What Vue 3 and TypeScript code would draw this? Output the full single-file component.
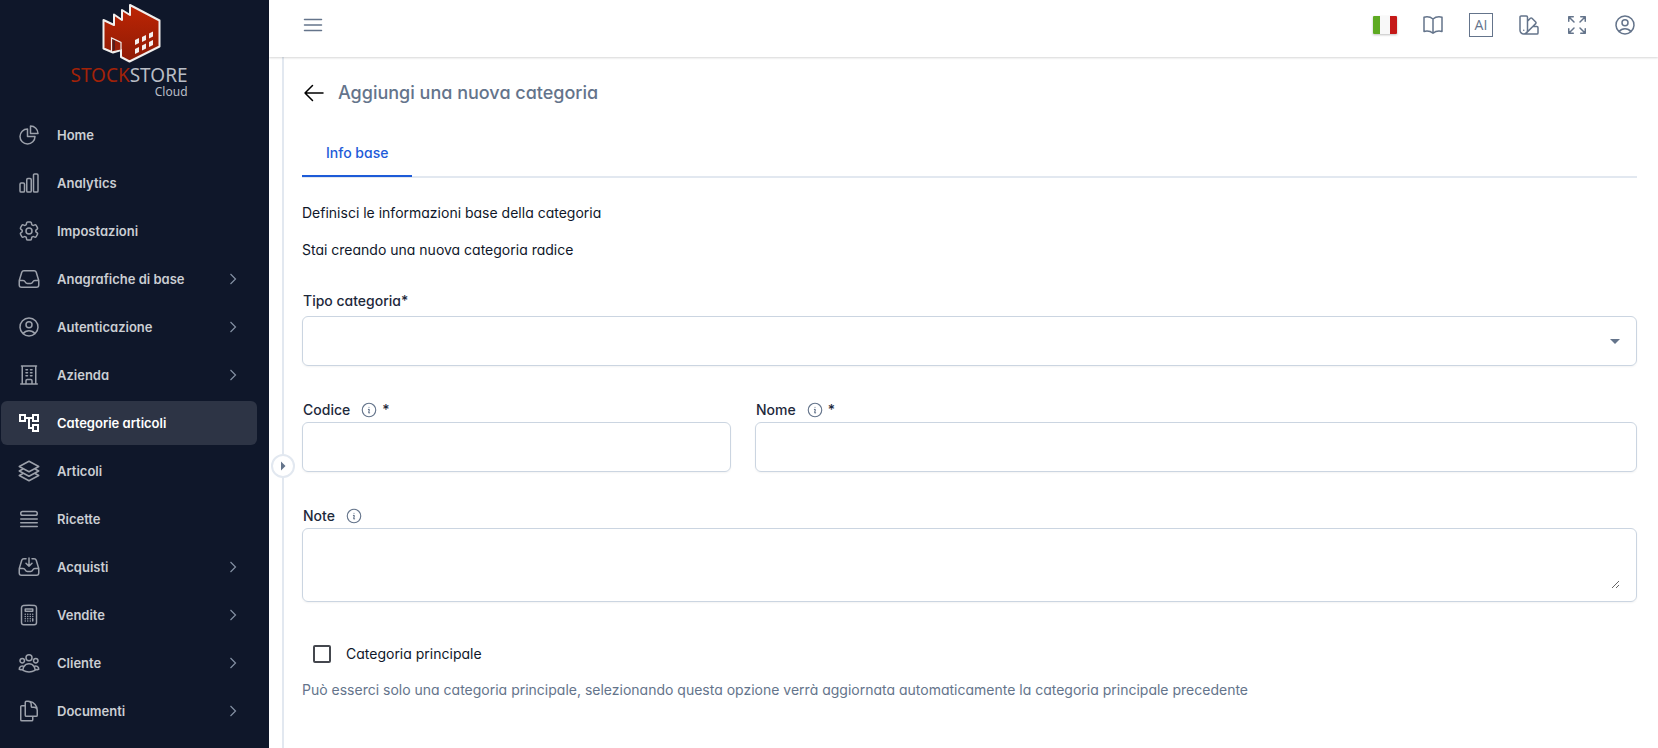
<script setup lang="ts">
import { ref } from 'vue'

interface NavItem {
  label: string
  icon: string[]
  fill?: boolean
  children?: boolean
  active?: boolean
}

const userCircle =
  'M17.982 18.725A7.488 7.488 0 0012 15.75a7.488 7.488 0 00-5.982 2.975m11.963 0a9 9 0 10-11.963 0m11.963 0A8.966 8.966 0 0112 21a8.966 8.966 0 01-5.982-2.275M15 9.75a3 3 0 11-6 0 3 3 0 016 0z'

const items: NavItem[] = [
  {
    label: 'Home',
    icon: ['M10.5 6a7.5 7.5 0 107.5 7.5h-7.5V6z', 'M13.5 10.5H21A7.5 7.5 0 0013.5 3v7.5z'],
  },
  {
    label: 'Analytics',
    icon: [
      'M3 13.125C3 12.504 3.504 12 4.125 12h2.25c.621 0 1.125.504 1.125 1.125v6.75C7.5 20.496 6.996 21 6.375 21h-2.25A1.125 1.125 0 013 19.875v-6.75zM9.75 8.625c0-.621.504-1.125 1.125-1.125h2.25c.621 0 1.125.504 1.125 1.125v11.25c0 .621-.504 1.125-1.125 1.125h-2.25a1.125 1.125 0 01-1.125-1.125V8.625zM16.5 4.125c0-.621.504-1.125 1.125-1.125h2.25C20.496 3 21 3.504 21 4.125v15.75c0 .621-.504 1.125-1.125 1.125h-2.25a1.125 1.125 0 01-1.125-1.125V4.125z',
    ],
  },
  {
    label: 'Impostazioni',
    icon: [
      'M9.594 3.94c.09-.542.56-.94 1.11-.94h2.593c.55 0 1.02.398 1.11.94l.213 1.281c.063.374.313.686.645.87.074.04.147.083.22.127.324.196.72.257 1.075.124l1.217-.456a1.125 1.125 0 011.37.49l1.296 2.247a1.125 1.125 0 01-.26 1.431l-1.003.827c-.293.24-.438.613-.431.992a6.759 6.759 0 010 .255c-.007.378.138.75.43.99l1.005.828c.424.35.534.954.26 1.43l-1.298 2.247a1.125 1.125 0 01-1.369.491l-1.217-.456c-.355-.133-.75-.072-1.076.124a6.57 6.57 0 01-.22.128c-.331.183-.581.495-.644.869l-.213 1.28c-.09.543-.56.941-1.11.941h-2.594c-.55 0-1.02-.398-1.11-.94l-.213-1.281c-.062-.374-.312-.686-.644-.87a6.52 6.52 0 01-.22-.127c-.325-.196-.72-.257-1.076-.124l-1.217.456a1.125 1.125 0 01-1.369-.49l-1.297-2.247a1.125 1.125 0 01.26-1.431l1.004-.827c.292-.24.437-.613.43-.992a6.932 6.932 0 010-.255c.007-.378-.138-.75-.43-.99l-1.004-.828a1.125 1.125 0 01-.26-1.43l1.297-2.247a1.125 1.125 0 011.37-.491l1.216.456c.356.133.751.072 1.076-.124.072-.044.146-.087.22-.128.332-.183.582-.495.644-.869l.214-1.281z',
      'M15 12a3 3 0 11-6 0 3 3 0 016 0z',
    ],
  },
  {
    label: 'Anagrafiche di base',
    children: true,
    icon: [
      'M2.25 13.5h3.86a2.25 2.25 0 012.012 1.244l.256.512a2.25 2.25 0 002.013 1.244h3.218a2.25 2.25 0 002.013-1.244l.256-.512a2.25 2.25 0 012.013-1.244h3.859m-19.5.338V18a2.25 2.25 0 002.25 2.25h15A2.25 2.25 0 0021.75 18v-4.162c0-.224-.034-.447-.1-.661L19.24 5.338a2.25 2.25 0 00-2.15-1.588H6.911a2.25 2.25 0 00-2.15 1.588L2.35 13.177a2.25 2.25 0 00-.1.661z',
    ],
  },
  { label: 'Autenticazione', children: true, icon: [userCircle] },
  {
    label: 'Azienda',
    children: true,
    icon: [
      'M3.75 21h16.5M4.5 3h15M5.25 3v18m13.5-18v18M9 6.75h1.5m-1.5 3h1.5m-1.5 3h1.5m3-6H15m-1.5 3H15m-1.5 3H15M9 21v-3.375c0-.621.504-1.125 1.125-1.125h3.75c.621 0 1.125.504 1.125 1.125V21',
    ],
  },
  {
    label: 'Categorie articoli',
    active: true,
    fill: true,
    icon: [
      'M22 11V3h-7v3H9V3H2v8h7V8h2v10h4v3h7v-8h-7v3h-2V8h2v3h7zM7 9H4V5h3v4zm10 6h3v4h-3v-4zm0-10h3v4h-3V5z',
    ],
  },
  {
    label: 'Articoli',
    icon: [
      'M6.429 9.75L2.25 12l4.179 2.25m0-4.5l5.571 3 5.571-3m-11.142 0L2.25 7.5 12 2.25l9.75 5.25-4.179 2.25m0 0L21.75 12l-4.179 2.25m0 0l4.179 2.25L12 21.75 2.25 16.5l4.179-2.25m11.142 0l-5.571 3-5.571-3',
    ],
  },
  {
    label: 'Ricette',
    icon: [
      'M3.75 12h16.5m-16.5 3.75h16.5M3.75 19.5h16.5M5.625 4.5h12.75a1.875 1.875 0 010 3.75H5.625a1.875 1.875 0 010-3.75z',
    ],
  },
  {
    label: 'Acquisti',
    children: true,
    icon: [
      'M9 3.75H6.912a2.25 2.25 0 00-2.15 1.588L2.35 13.177a2.25 2.25 0 00-.1.661V18a2.25 2.25 0 002.25 2.25h15A2.25 2.25 0 0021.75 18v-4.162c0-.224-.034-.447-.1-.661L19.24 5.338a2.25 2.25 0 00-2.15-1.588H15M2.25 13.5h3.86a2.25 2.25 0 012.012 1.244l.256.512a2.25 2.25 0 002.013 1.244h3.218a2.25 2.25 0 002.013-1.244l.256-.512a2.25 2.25 0 012.013-1.244h3.859M12 3v8.25m0 0l-3-3m3 3l3-3',
    ],
  },
  {
    label: 'Vendite',
    children: true,
    icon: [
      'M15.75 15.75V18M8.25 11.25h.008v.008H8.25v-.008zm0 2.25h.008v.008H8.25V13.5zm0 2.25h.008v.008H8.25v-.008zm0 2.25h.008v.008H8.25V18zm2.5-6.75h.008v.008h-.008v-.008zm0 2.25h.008v.008h-.008V13.5zm0 2.25h.008v.008h-.008v-.008zm0 2.25h.008v.008h-.008V18zm2.5-6.75h.008v.008h-.008v-.008zm0 2.25h.008v.008h-.008V13.5zm0 2.25h.008v.008h-.008v-.008zm0 2.25h.008v.008h-.008V18zm2.5-6.75h.008v.008h-.008v-.008zm0 2.25h.008v.008h-.008V13.5z',
      'M8.25 6h7.5v2.25h-7.5V6z',
      'M12 2.25c-1.892 0-3.758.11-5.593.322C5.307 2.7 4.5 3.65 4.5 4.757V19.5a2.25 2.25 0 002.25 2.25h10.5a2.25 2.25 0 002.25-2.25V4.757c0-1.108-.806-2.057-1.907-2.185A48.507 48.507 0 0012 2.25z',
    ],
  },
  {
    label: 'Cliente',
    children: true,
    icon: [
      'M18 18.72a9.094 9.094 0 003.741-.479 3 3 0 00-4.682-2.72m.94 3.198l.001.031c0 .225-.012.447-.037.666A11.944 11.944 0 0112 21c-2.17 0-4.207-.576-5.963-1.584A6.062 6.062 0 016 18.719m12 0a5.971 5.971 0 00-.941-3.197m0 0A5.995 5.995 0 0012 12.75a5.995 5.995 0 00-5.058 2.772m0 0a3 3 0 00-4.681 2.72 8.986 8.986 0 003.74.477m.94-3.197a5.971 5.971 0 00-.94 3.197M15 6.75a3 3 0 11-6 0 3 3 0 016 0zm6 3a2.25 2.25 0 11-4.5 0 2.25 2.25 0 014.5 0zm-13.5 0a2.25 2.25 0 11-4.5 0 2.25 2.25 0 014.5 0z',
    ],
  },
  {
    label: 'Documenti',
    children: true,
    icon: [
      'M15.75 17.25v3.375c0 .621-.504 1.125-1.125 1.125h-9.75a1.125 1.125 0 01-1.125-1.125V7.875c0-.621.504-1.125 1.125-1.125H6.75a9.06 9.06 0 011.5.124m7.5 10.376h3.375c.621 0 1.125-.504 1.125-1.125V11.25c0-4.46-3.243-8.161-7.5-8.876a9.06 9.06 0 00-1.5-.124H9.375c-.621 0-1.125.504-1.125 1.125v3.5m7.5 10.375H9.375a1.125 1.125 0 01-1.125-1.125v-9.25m12 6.625v-1.875a3.375 3.375 0 00-3.375-3.375h-1.5a1.125 1.125 0 01-1.125-1.125v-1.5a3.375 3.375 0 00-3.375-3.375H9.75',
    ],
  },
]

const infoPath =
  'M11.25 11.25l.041-.02a.75.75 0 011.063.852l-.708 2.836a.75.75 0 001.063.853l.041-.021M21 12a9 9 0 11-18 0 9 9 0 0118 0zm-9-3.75h.008v.008H12V8.25z'

const tipo = ref('')
const codice = ref('')
const nome = ref('')
const note = ref('')
const principale = ref(false)
</script>

<template>
  <div class="shell">
    <aside class="sidebar">
      <div class="logo">
        <svg class="factory" viewBox="0 0 60 60" aria-hidden="true">
          <defs>
            <linearGradient id="brick" x1="0" y1="0" x2="0" y2="1">
              <stop offset="0" stop-color="#bd2504" />
              <stop offset="1" stop-color="#8f1b05" />
            </linearGradient>
          </defs>
          <path
            d="M1.5 17L12 22V11.5L20 17V7L28 12V2L57.5 17.5V43.5L27.5 58.5L19 54V47L11 49.5L1.5 45.5Z"
            fill="url(#brick)"
            stroke="#f1efed"
            stroke-width="2"
            stroke-linejoin="round"
          />
          <path d="M9.5 49V35L19 39.5V47Z" fill="#9b2009" stroke="#f1efed" stroke-width="1.2" />
          <path d="M10.5 48.5L13 46.5V37.5L10.5 36.5Z" fill="#0f172a" opacity=".5" />
          <path
            d="M33 37l4-2v5l-4 2zM40 34l4-2v5l-4 2zM47 30.5l4-2v5l-4 2zM33 46l4-2v5l-4 2zM40 42.5l4-2v5l-4 2zM47 39l4-2v5l-4 2z"
            fill="#f4efed"
          />
        </svg>
        <div class="wordmark">
          <div class="brand"><span>STOCK</span>STORE</div>
          <div class="sub">Cloud</div>
        </div>
      </div>
      <nav class="nav">
        <a v-for="item in items" :key="item.label" href="#" class="nav-item" :class="{ active: item.active }">
          <svg class="icon" :class="{ solid: item.fill }" viewBox="0 0 24 24" aria-hidden="true">
            <path v-for="d in item.icon" :key="d" :d="d" />
          </svg>
          <span class="nav-label">{{ item.label }}</span>
          <svg v-if="item.children" class="chevron" viewBox="0 0 16 16" aria-hidden="true">
            <path d="M5.5 3l5 5-5 5" />
          </svg>
        </a>
      </nav>
    </aside>

    <div class="page">
      <header class="topbar">
        <button class="icon-btn" type="button" aria-label="Menu">
          <svg class="icon" viewBox="0 0 24 24"><path d="M3.5 6.5h17M3.5 12h17M3.5 17.5h17" /></svg>
        </button>
        <div class="actions">
          <button class="icon-btn" type="button" aria-label="Lingua">
            <svg class="flag" viewBox="0 0 24 18">
              <rect width="24" height="18" rx="1" fill="#f8f8f8" />
              <path d="M1 0h6v18H1a1 1 0 01-1-1V1a1 1 0 011-1z" fill="#5eaa22" />
              <path d="M17 0h6a1 1 0 011 1v16a1 1 0 01-1 1h-6z" fill="#c51918" />
            </svg>
          </button>
          <button class="icon-btn" type="button" aria-label="Guida">
            <svg class="icon" viewBox="0 0 24 24">
              <path
                d="M12 6.042A8.967 8.967 0 006 3.75c-1.052 0-2.062.18-3 .512v14.25A8.987 8.987 0 016 18c2.305 0 4.408.867 6 2.292m0-14.25a8.966 8.966 0 016-2.292c1.052 0 2.062.18 3 .512v14.25A8.987 8.987 0 0018 18a8.967 8.967 0 00-6 2.292m0-14.25v14.25"
              />
            </svg>
          </button>
          <button class="icon-btn" type="button"><span class="ai">AI</span></button>
          <button class="icon-btn" type="button" aria-label="Tema">
            <svg class="icon" viewBox="0 0 24 24">
              <path
                d="M4.098 19.902a3.75 3.75 0 005.304 0l6.401-6.402M6.75 21A3.75 3.75 0 013 17.25V4.125C3 3.504 3.504 3 4.125 3h5.25c.621 0 1.125.504 1.125 1.125v4.072M6.75 21a3.75 3.75 0 003.75-3.75V8.197M6.75 21h13.125c.621 0 1.125-.504 1.125-1.125v-5.25c0-.621-.504-1.125-1.125-1.125h-4.072M10.5 8.197l2.88-2.88c.438-.439 1.15-.439 1.59 0l3.712 3.713c.44.44.44 1.152 0 1.59l-2.879 2.88M6.75 17.25h.008v.008H6.75v-.008z"
              />
            </svg>
          </button>
          <button class="icon-btn" type="button" aria-label="Schermo intero">
            <svg class="icon" viewBox="0 0 24 24">
              <path
                d="M3.75 3.75v4.5m0-4.5h4.5m-4.5 0L9 9M3.75 20.25v-4.5m0 4.5h4.5m-4.5 0L9 15M20.25 3.75h-4.5m4.5 0v4.5m0-4.5L15 9m5.25 11.25h-4.5m4.5 0v-4.5m0 4.5L15 15"
              />
            </svg>
          </button>
          <button class="icon-btn" type="button" aria-label="Profilo">
            <svg class="icon" viewBox="0 0 24 24"><path :d="userCircle" /></svg>
          </button>
        </div>
      </header>

      <div class="body">
        <div class="splitter">
          <button class="handle" type="button" aria-label="Espandi">
            <svg viewBox="0 0 8 10"><path d="M2 0.5l4.5 4.5L2 9.5z" /></svg>
          </button>
        </div>
        <main class="content">
          <div class="heading">
            <button class="back" type="button" aria-label="Indietro">
              <svg viewBox="0 0 24 24"><path d="M10.5 19.5L3 12l7.5-7.5M3 12h18" /></svg>
            </button>
            <h1>Aggiungi una nuova categoria</h1>
          </div>
          <div class="tabs" role="tablist">
            <button class="tab" type="button" role="tab" aria-selected="true">Info base</button>
          </div>
          <div class="intro">
            <p>Definisci le informazioni base della categoria</p>
            <p>Stai creando una nuova categoria radice</p>
          </div>

          <form class="form" @submit.prevent>
            <div class="field full">
              <div class="label-row plain"><label for="tipo">Tipo categoria*</label></div>
              <div class="control">
                <select id="tipo" v-model="tipo">
                  <option value=""></option>
                </select>
                <svg class="caret" viewBox="0 0 10 5" aria-hidden="true"><path d="M0 0h10L5 5z" /></svg>
              </div>
            </div>
            <div class="field third">
              <div class="label-row">
                <label for="codice">Codice</label>
                <svg class="info" viewBox="0 0 24 24" aria-hidden="true"><path :d="infoPath" /></svg>
                <span>*</span>
              </div>
              <div class="control"><input id="codice" v-model="codice" type="text" /></div>
            </div>
            <div class="field rest">
              <div class="label-row">
                <label for="nome">Nome</label>
                <svg class="info" viewBox="0 0 24 24" aria-hidden="true"><path :d="infoPath" /></svg>
                <span>*</span>
              </div>
              <div class="control"><input id="nome" v-model="nome" type="text" /></div>
            </div>
            <div class="field full">
              <div class="label-row">
                <label for="note">Note</label>
                <svg class="info" viewBox="0 0 24 24" aria-hidden="true"><path :d="infoPath" /></svg>
              </div>
              <div class="control area"><textarea id="note" v-model="note" rows="2"></textarea></div>
            </div>
            <div class="main-category">
              <label class="check">
                <input v-model="principale" type="checkbox" />
                <span>Categoria principale</span>
              </label>
              <p class="hint">
                Può esserci solo una categoria principale, selezionando questa opzione verrà aggiornata
                automaticamente la categoria principale precedente
              </p>
            </div>
          </form>
        </main>
      </div>
    </div>
  </div>
</template>

<style>
body {
  margin: 0;
  background: #fff;
}
</style>

<style scoped>
* {
  box-sizing: border-box;
}
.shell {
  display: flex;
  height: 100vh;
  overflow: hidden;
  font-family: Inter, 'Noto Sans', sans-serif;
  font-feature-settings: 'cv11';
  font-size: 14px;
  line-height: 20px;
  color: #1e293b;
}
button,
input,
select,
textarea {
  font: inherit;
  font-feature-settings: inherit;
  color: inherit;
  margin: 0;
  padding: 0;
  border: 0;
  background: none;
}
.icon {
  width: 24px;
  height: 24px;
  flex: none;
  fill: none;
  stroke: currentColor;
  stroke-width: 1.5;
  stroke-linecap: round;
  stroke-linejoin: round;
}
.icon.solid {
  fill: currentColor;
  stroke: none;
}
.sidebar {
  width: 269px;
  flex: none;
  background: #0f172a;
  overflow: hidden;
}
.logo {
  display: flex;
  flex-direction: column;
  align-items: center;
  width: 258px;
  height: 113px;
  padding-top: 3px;
}
.factory {
  width: 60px;
  height: 60px;
  margin-left: 6px;
  overflow: visible;
}
.wordmark {
  display: flex;
  flex-direction: column;
  align-items: flex-end;
  padding-top: 2px;
  font-family: 'Noto Sans', 'Open Sans', sans-serif;
  color: #b9bdc5;
}
.brand {
  font-size: 19px;
  line-height: 21px;
}
.brand span {
  color: #a32208;
}
.sub {
  font-size: 12px;
  line-height: 12px;
}
.nav {
  display: flex;
  flex-direction: column;
  gap: 4px;
  padding: 0 12px 0 1px;
}
.nav-item {
  display: flex;
  align-items: center;
  gap: 16px;
  height: 44px;
  flex: none;
  padding: 0 16px;
  border-radius: 6px;
  color: #cbced3;
  font-size: 13px;
  font-weight: 600;
  text-decoration: none;
}
.nav-item .icon {
  color: #9ca1ab;
}
.nav-item.active {
  background: #2d3445;
  color: #fff;
}
.nav-item.active .icon {
  color: #fff;
}
.nav-label {
  flex: 1;
}
.chevron {
  width: 16px;
  height: 16px;
  fill: none;
  stroke: #8490a3;
  stroke-width: 1.2;
}
.page {
  flex: 1;
  min-width: 0;
  display: flex;
  flex-direction: column;
}
.topbar {
  display: flex;
  align-items: center;
  justify-content: space-between;
  height: 57px;
  flex: none;
  padding: 0 21px 8px 32px;
  box-shadow: 0 1px 2px rgba(0, 0, 0, 0.16);
  z-index: 1;
}
.actions {
  display: flex;
  gap: 24px;
}
.icon-btn {
  display: flex;
  align-items: center;
  justify-content: center;
  width: 24px;
  height: 24px;
  color: #64748b;
}
.flag {
  width: 24px;
  height: 18px;
  filter: drop-shadow(0 1px 1px rgba(0, 0, 0, 0.25));
}
.ai {
  flex: none;
  width: 24px;
  height: 24px;
  border: 1px solid #64748b;
  font-family: 'Open Sans', sans-serif;
  font-size: 14px;
  line-height: 22px;
  text-align: center;
}
.body {
  flex: 1;
  display: flex;
  min-height: 0;
}
.splitter {
  width: 24px;
  flex: none;
  margin-left: 2px;
  display: flex;
  align-items: center;
  justify-content: center;
  padding-top: 127px;
  background: linear-gradient(#e2e8f0, #e2e8f0) center / 2px 100% no-repeat;
}
.handle {
  display: flex;
  align-items: center;
  justify-content: center;
  width: 24px;
  height: 24px;
  border: 2px solid #e2e8f0;
  border-radius: 50%;
  background: #fff;
}
.handle svg {
  width: 8px;
  height: 10px;
  fill: #64748b;
}
.content {
  flex: 1;
  min-width: 0;
  padding: 24px 21px 0 7px;
}
.heading {
  display: flex;
  align-items: center;
  gap: 12px;
  height: 24px;
}
.back svg {
  display: block;
  width: 24px;
  height: 24px;
  fill: none;
  stroke: #000;
  stroke-width: 1.5;
  stroke-linecap: round;
  stroke-linejoin: round;
}
h1 {
  margin: 0;
  font-size: 18px;
  line-height: 24px;
  font-weight: 500;
  color: #64748b;
}
.tabs {
  display: flex;
  height: 48px;
  margin-top: 25px;
  border-bottom: 2px solid #e2e8f0;
}
.tab {
  height: 47px;
  padding: 0 24px;
  border-bottom: 2px solid #1d5bd8;
  color: #1d5bd8;
  font-weight: 500;
}
.intro {
  padding-top: 25px;
}
.intro p {
  margin: 0 0 17px;
  color: #0f172a;
}
.form {
  display: grid;
  grid-template-columns: repeat(12, minmax(0, 1fr));
  column-gap: 24px;
  row-gap: 32px;
  padding-top: 15px;
}
.full {
  grid-column: span 12;
}
.third {
  grid-column: span 4;
}
.rest {
  grid-column: span 8;
}
.label-row {
  display: flex;
  align-items: center;
  gap: 10px;
  height: 24px;
  padding-left: 1px;
  font-weight: 500;
}
.label-row.plain {
  padding-bottom: 6px;
}
.info {
  width: 18px;
  height: 18px;
  margin-right: -6px;
  fill: none;
  stroke: #64748b;
  stroke-width: 1.5;
  stroke-linecap: round;
  stroke-linejoin: round;
}
.control {
  display: grid;
  align-items: center;
  height: 50px;
  border: 1px solid #cbd5e1;
  border-radius: 6px;
  box-shadow: 0 1px 2px rgba(0, 0, 0, 0.05);
}
.control input,
.control select {
  grid-area: 1 / 1;
  width: 100%;
  height: 48px;
  padding: 0 16px;
  appearance: none;
}
.caret {
  grid-area: 1 / 1;
  justify-self: end;
  width: 10px;
  height: 5px;
  margin-right: 16px;
  fill: #64748b;
  pointer-events: none;
}
.control.area {
  height: 74px;
  padding: 12px 16px;
}
.area textarea {
  display: block;
  width: 100%;
  height: 48px;
  resize: vertical;
}
.main-category {
  grid-column: span 12;
  padding-top: 10px;
}
.check {
  display: flex;
  align-items: center;
  gap: 15px;
  height: 20px;
  padding-left: 11px;
  color: #0f172a;
}
.check input {
  appearance: none;
  width: 18px;
  height: 18px;
  border: 2px solid #44474e;
  border-radius: 2px;
  background: #fff;
}
.check input:checked {
  background: #1d5bd8;
}
.hint {
  margin: 16px 0 0;
  color: #64748b;
}
</style>
